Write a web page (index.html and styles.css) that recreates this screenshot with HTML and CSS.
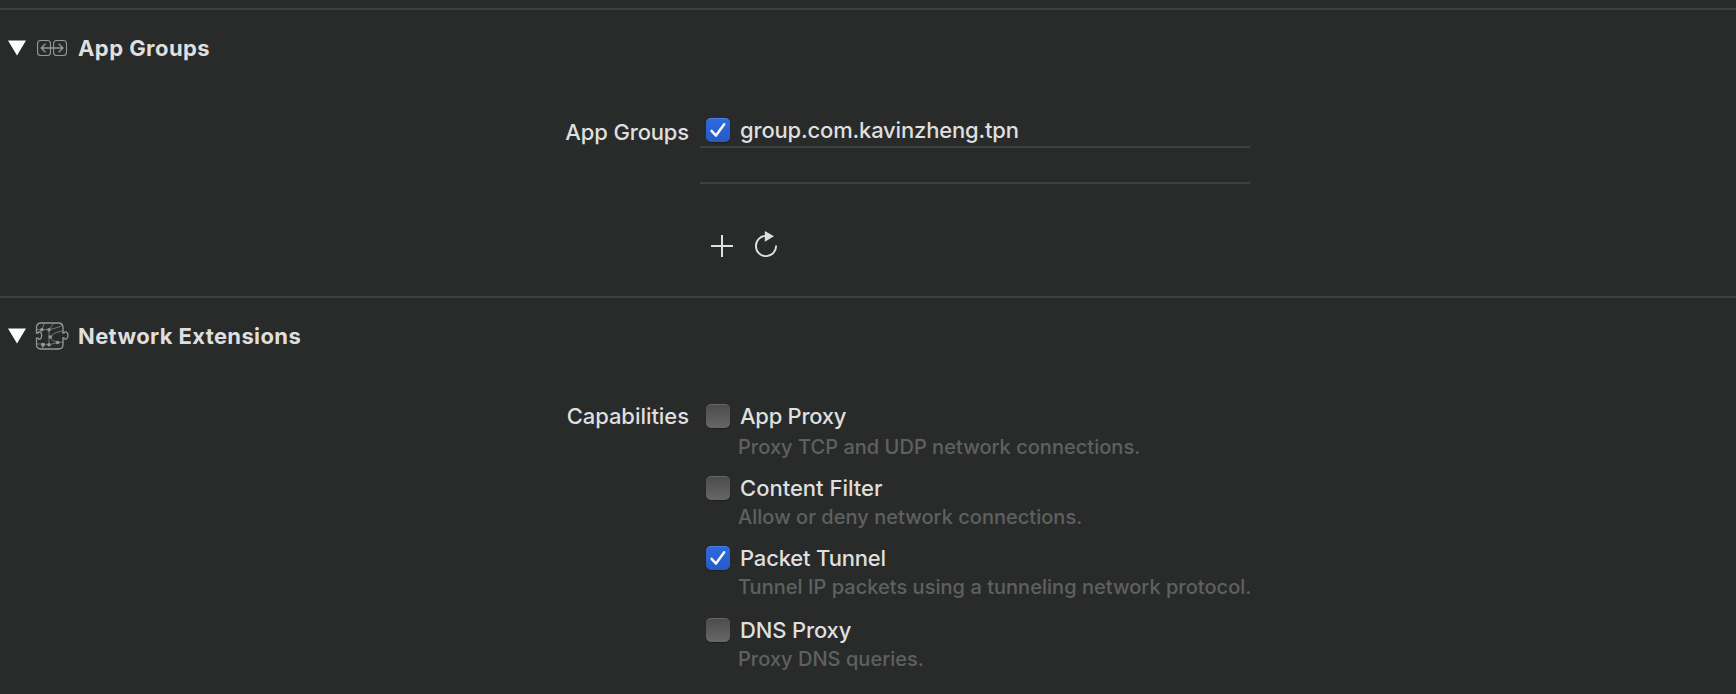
FILE: index.html
```html
<!DOCTYPE html>
<html lang="en">
<head>
<meta charset="utf-8">
<title>Capabilities</title>
<link rel="stylesheet" href="styles.css">
</head>
<body>
<section class="section groups">
  <header class="head">
    <svg class="arrow" width="18" height="16" viewBox="0 0 18 16"><path d="M0 0.5H18L9 15.5Z" fill="#fff"/></svg>
    <svg class="icon" width="34" height="30" viewBox="0 0 34 30" fill="none" stroke="#969897" stroke-width="1.1">
      <rect x="2.6" y="7.5" width="12.9" height="15" rx="3"/><rect x="18.6" y="7.5" width="12.9" height="15" rx="3"/>
      <path d="M6.2 15H28M10.5 10.8L6.2 15l4.3 4.2M23.7 10.8L28 15l-4.3 4.2" stroke-width="1.3"/>
    </svg>
    <h2 class="title title-groups">App Groups</h2>
  </header>
  <div class="form">
    <div class="label label-groups">App Groups</div>
    <div class="table">
      <div class="row">
        <span class="box checked"><svg width="24" height="24" viewBox="0 0 24 24"><path d="M5.6 12.9L10 17.6L18.2 6.2" fill="none" stroke="#f4f7fd" stroke-width="2.5" stroke-linecap="round" stroke-linejoin="round"/></svg></span>
        <span class="name n-group">group.com.kavinzheng.tpn</span>
      </div>
      <div class="row"></div>
      <div class="tools">
        <svg width="22" height="22" viewBox="0 0 22 22"><path d="M0 11H22M11 0V22" stroke="#dfdfdf" stroke-width="2"/></svg>
        <svg width="24" height="26" viewBox="0 0 24 26"><path d="M12 4.9A10.1 10.1 0 1 0 22.1 14.5" fill="none" stroke="#dfdfdf" stroke-width="1.9"/><path d="M10.8 0L20 5.2L10.8 10.8Z" fill="#dfdfdf"/></svg>
      </div>
    </div>
  </div>
</section>
<section class="section network">
  <header class="head">
    <svg class="arrow" width="18" height="16" viewBox="0 0 18 16"><path d="M0 0.5H18L9 15.5Z" fill="#fff"/></svg>
    <svg class="icon" width="34" height="30" viewBox="0 0 34 30" fill="none" stroke="#969897">
      <path d="M6 2H23.5Q28 2 28 6.5V12.2H28.9C29.5 9.8 33 10.4 33 14.5C33 18.6 29.5 19.2 28.9 16.8H28V23.5Q28 28 23.5 28H6Q1.5 28 1.5 23.5V17.2H3.2C3.6 19.2 6.7 18.6 6.7 14.5C6.7 10.4 3.6 9.8 3.2 12H1.5V6.5Q1.5 2 6 2Z" stroke-width="1.3"/>
      <path d="M1.8 8.6H14L18.8 2.2M7 8.6L9.2 2.2M14 8.6C22 7.2 26 5 28 3.8M14 8.6V23.6M15.2 16C20 11 24 10.4 28 10.2M15.2 16C17 20 20 21.2 28 21.5M1.8 23H8L14.5 23.6L22.7 21.5M8 23L7.2 28" stroke-width=".7"/>
      <g fill="#969897" stroke="none"><circle cx="6.8" cy="8.8" r="1.8"/><circle cx="14" cy="8.7" r="1.8"/><circle cx="15.3" cy="16" r="1.8"/><circle cx="22.7" cy="21.5" r="1.8"/><circle cx="8" cy="23.7" r="2"/><circle cx="14" cy="23.7" r="1.7"/></g>
    </svg>
    <h2 class="title title-network">Network Extensions</h2>
  </header>
  <div class="form">
    <div class="label label-caps">Capabilities</div>
    <div class="options">
      <div class="option first"><span class="box"></span><span class="name n-app">App Proxy</span><p class="desc">Proxy TCP and UDP network connections.</p></div>
      <div class="option"><span class="box"></span><span class="name n-filter">Content Filter</span><p class="desc">Allow or deny network connections.</p></div>
      <div class="option"><span class="box checked"><svg width="24" height="24" viewBox="0 0 24 24"><path d="M5.6 12.9L10 17.6L18.2 6.2" fill="none" stroke="#f4f7fd" stroke-width="2.5" stroke-linecap="round" stroke-linejoin="round"/></svg></span><span class="name n-tunnel">Packet Tunnel</span><p class="desc">Tunnel IP packets using a tunneling network protocol.</p></div>
      <div class="option last"><span class="box"></span><span class="name n-dns">DNS Proxy</span><p class="desc">Proxy DNS queries.</p></div>
    </div>
  </div>
</section>
</body>
</html>
```
FILE: styles.css
```css
* { box-sizing: border-box; }
body {
  margin: 0;
  padding-top: 8px;
  height: 694px;
  overflow: hidden;
  background: #292b2a;
  color: #dfdfdf;
  font: 500 22px/26px Inter, "Liberation Sans", sans-serif;
  white-space: nowrap;
}
.section { border-top: 2px solid #3f4140; }
.groups { height: 288px; padding-top: 23px; }
.network { padding-top: 23px; }
.head { display: flex; align-items: center; height: 30px; padding-left: 8px; }
.arrow { margin: 0 9px 1px 0; }
.icon { margin-right: 9px; }
.title { margin: 0; font-size: 22px; font-weight: 700; }
.title-groups { letter-spacing: .44px; }
.title-network { letter-spacing: .37px; }
.form { display: grid; grid-template-columns: 690px 550px; column-gap: 10px; }
.label { text-align: right; padding-right: 1px; }
.label-groups { letter-spacing: -.15px; }
.label-caps { letter-spacing: -.05px; }
.groups .form { margin-top: 53px; }
.groups .label { padding-top: 3px; }
.network .form { margin-top: 52px; }
.row { height: 36px; border-bottom: 2px solid #3f4140; display: flex; padding-left: 6px; }
.row:first-child { height: 32px; }
.box {
  display: block;
  width: 24px;
  height: 24px;
  flex: none;
  border-radius: 5px;
  background: linear-gradient(#4a4b4a, #666766);
  box-shadow: 0 1px 1px rgba(0,0,0,.3), inset 0 1px 0 rgba(255,255,255,.14);
}
.box.checked { background: linear-gradient(#2f6ae0, #265ac4); }
.box svg { display: block; }
.row .box { margin-top: 2px; }
.row .name { margin: 1px 0 0 10px; }
.n-group { letter-spacing: -.17px; }
.n-app { letter-spacing: -.27px; }
.n-filter { letter-spacing: 0; }
.n-tunnel { letter-spacing: -.17px; }
.n-dns { letter-spacing: -.15px; }
.tools { display: flex; align-items: flex-end; gap: 21px; padding: 47px 0 0 11px; }
.options { padding-left: 6px; }
.option { display: grid; grid-template-columns: 24px 1fr; column-gap: 10px; row-gap: 4px; margin-bottom: 16px; }
.option.first { row-gap: 6px; }
.option.last { margin-top: 18px; }
.option .box { margin-top: 1px; }
.desc { grid-column: 2; margin: 0 0 0 -2px; font-size: 20px; line-height: 24px; color: #5f6160; letter-spacing: .03px; }
```
